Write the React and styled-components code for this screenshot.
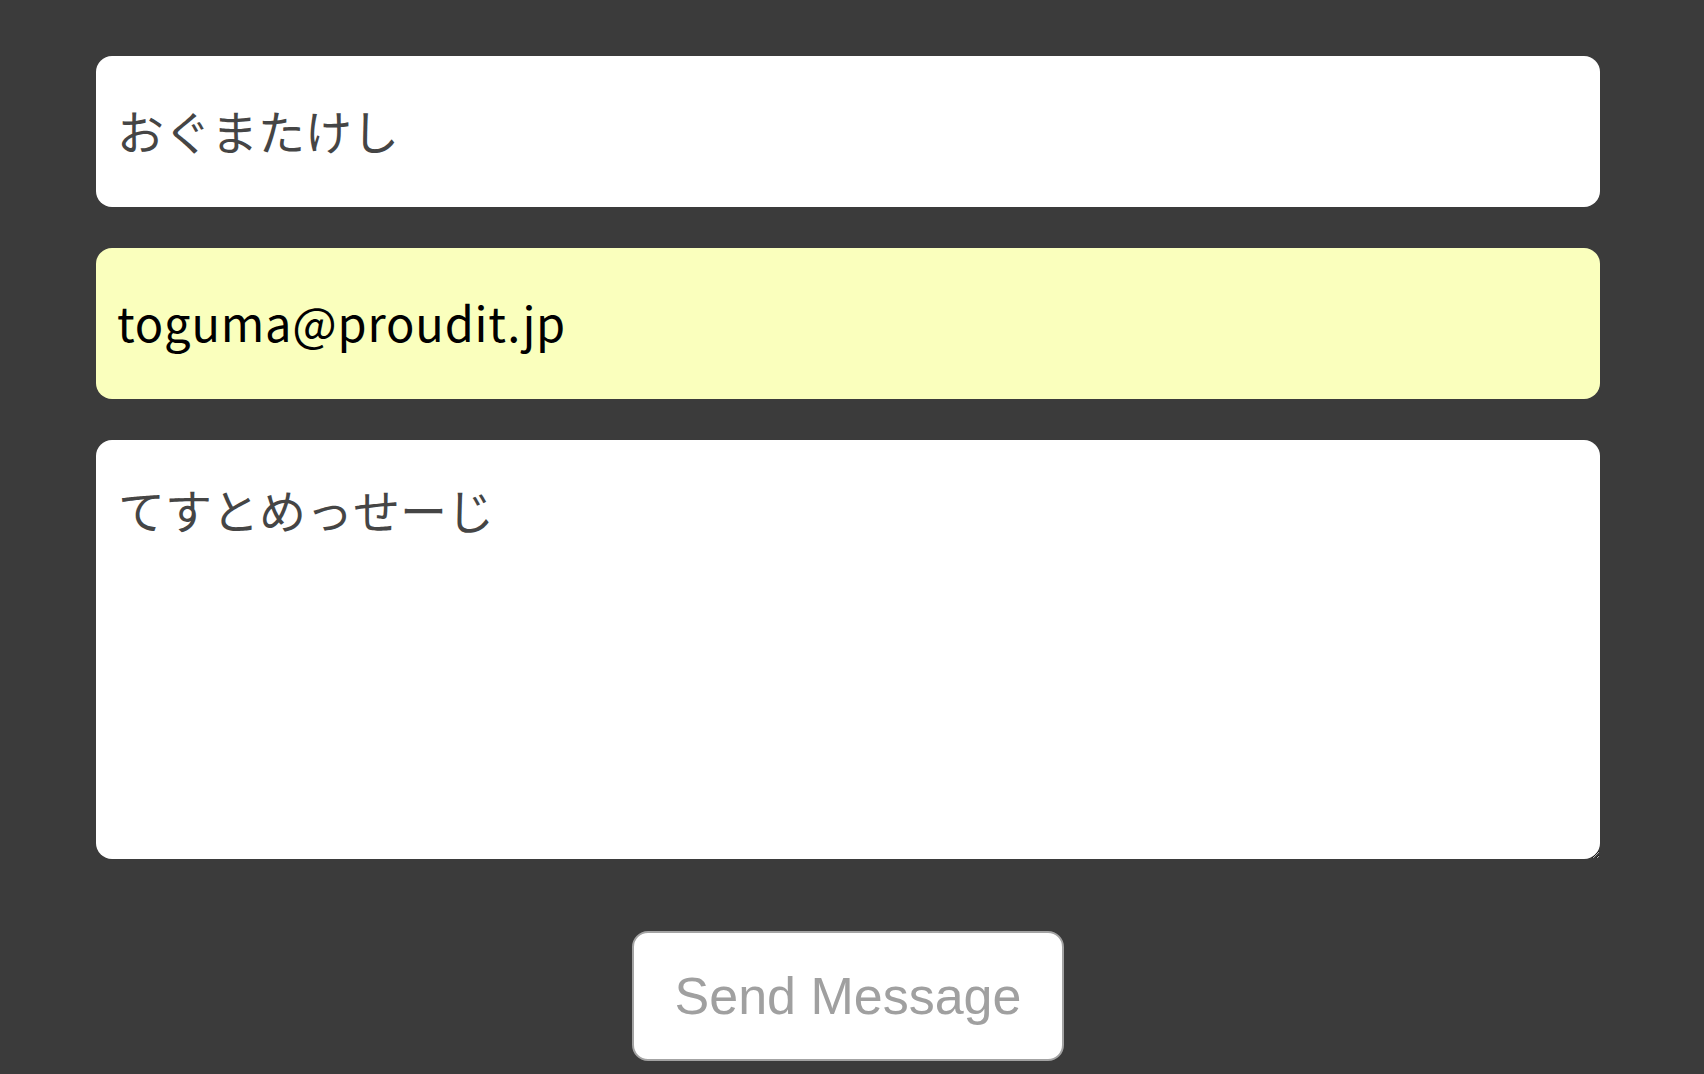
import React from "react";
import styled, { createGlobalStyle } from "styled-components";

const Global = createGlobalStyle`
  html, body {
    margin: 0;
    padding: 0;
    background: #3b3b3b;
  }
  body {
    font-family: "Noto Sans CJK JP", "Noto Sans", sans-serif;
  }
`;

const Form = styled.form`
  display: flex;
  flex-direction: column;
  gap: 41px;
  padding: 56px 104px 13px 96px;
  box-sizing: border-box;
  min-height: 1074px;
`;

const Field = styled.input`
  display: block;
  width: 100%;
  height: 151px;
  box-sizing: border-box;
  border: none;
  outline: none;
  border-radius: 16px;
  padding: 0 22px 5px 21px;
  margin: 0;
  background: ${(p) => (p.$autofill ? "#faffbd" : "#ffffff")};
  color: ${(p) => (p.$autofill ? "#000000" : "#454545")};
  font-family: "Noto Sans CJK JP", "Noto Sans", sans-serif;
  font-size: 47px;
  letter-spacing: ${(p) => (p.$autofill ? "0.8px" : "0")};
`;

const Area = styled.textarea`
  display: block;
  width: 100%;
  height: 419px;
  box-sizing: border-box;
  border: none;
  outline: none;
  border-radius: 16px;
  padding: 41px 22px;
  margin: 0;
  background: #ffffff;
  color: #454545;
  font-family: "Noto Sans CJK JP", "Noto Sans", sans-serif;
  font-size: 47px;
  line-height: 1.2;
`;

const Send = styled.button`
  align-self: center;
  width: 432px;
  height: 130px;
  margin-top: 31px;
  box-sizing: border-box;
  background: #ffffff;
  border: 2px solid #a3a3a3;
  border-radius: 16px;
  color: #a0a0a0;
  font-family: "Liberation Sans", Arial, sans-serif;
  font-size: 52px;
  padding: 0;
  cursor: pointer;
`;

export default function App() {
  return (
    <>
      <Global />
      <Form onSubmit={(e) => e.preventDefault()}>
        <Field type="text" defaultValue="おぐまたけし" />
        <Field type="email" $autofill defaultValue="toguma@proudit.jp" />
        <Area defaultValue="てすとめっせーじ" />
        <Send type="submit">Send Message</Send>
      </Form>
    </>
  );
}
